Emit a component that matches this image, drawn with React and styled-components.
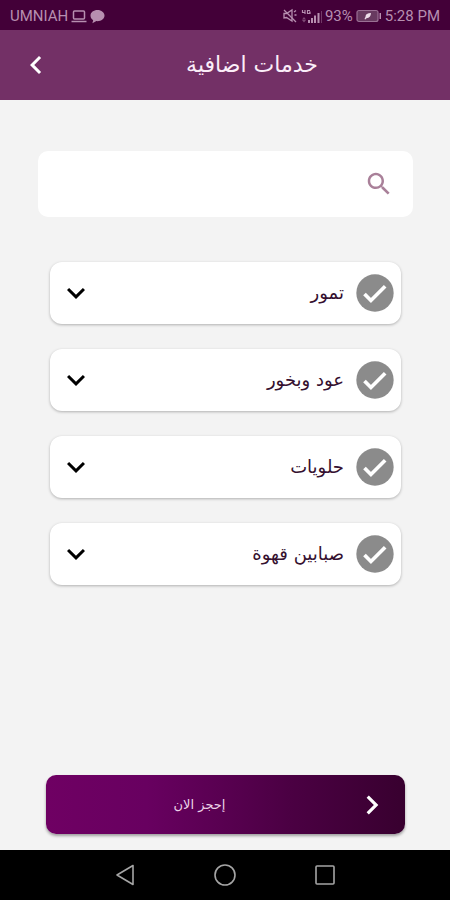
import React, { useState } from "react";
import styled, { createGlobalStyle } from "styled-components";

const GlobalStyle = createGlobalStyle`
  *, *::before, *::after { box-sizing: border-box; }
  body { margin: 0; background: #f3f3f3; }
  button, input { font: inherit; }
`;

const uiFont = `Roboto, "Liberation Sans", sans-serif`;
const arabicFont = `"DejaVu Sans", "Noto Sans", sans-serif`;

const Page = styled.div`
  display: flex;
  flex-direction: column;
  min-height: 100vh;
  background: #f3f3f3;
  font-family: ${arabicFont};
`;

const StatusBar = styled.div`
  display: flex;
  align-items: center;
  justify-content: space-between;
  height: 30px;
  padding: 2px 10px 0;
  background: #430038;
  color: #b78fb0;
  font-family: ${uiFont};
  font-size: 15px;
  line-height: 20px;
  white-space: nowrap;
`;

const StatusGroup = styled.div`
  display: flex;
  align-items: center;
  gap: ${(p) => p.$gap}px;
`;

const Header = styled.header`
  display: flex;
  align-items: center;
  height: 70px;
  background: #733066;
  color: #fff;
`;

const IconButton = styled.button`
  display: flex;
  align-items: center;
  justify-content: center;
  flex: none;
  width: 36px;
  height: 36px;
  padding: 0;
  border: 0;
  background: none;
  color: inherit;
  cursor: pointer;
`;

const BackButton = styled(IconButton)`
  margin-left: 18px;
`;

const Title = styled.h1`
  flex: 1;
  margin: 0;
  color: #fbeef9;
  font-size: 22px;
  font-weight: 400;
  line-height: 32px;
  text-align: center;
`;

const Content = styled.main`
  display: flex;
  flex: 1;
  flex-direction: column;
  padding: 51px 37px 16px 38px;
`;

const SearchBox = styled.label`
  display: flex;
  align-items: center;
  height: 66px;
  padding: 0 19px 0 12px;
  border-radius: 10px;
  background: #fff;
  color: #a98099;
`;

const SearchInput = styled.input`
  flex: 1;
  min-width: 0;
  height: 100%;
  border: 0;
  outline: 0;
  background: transparent;
  color: #3c0a33;
  font-size: 18px;
`;

const ServiceList = styled.ul`
  display: flex;
  flex-direction: column;
  gap: 25px;
  margin: 45px 12px 32px;
  padding: 0;
  list-style: none;
`;

const ServiceCard = styled.li`
  display: flex;
  align-items: center;
  justify-content: space-between;
  height: 62px;
  padding: 0 7px 0 8px;
  border-radius: 12px;
  background: #fff;
  box-shadow: 0 1px 3px rgba(0, 0, 0, 0.28);
  color: #000;
`;

const ServiceLabel = styled.label`
  display: flex;
  align-items: center;
  gap: 12px;
  color: #35102f;
  font-size: 18px;
  line-height: 28px;
  cursor: pointer;
`;

const Tick = styled.span`
  display: grid;
  width: 38px;
  height: 38px;
  color: #8b8b8b;

  & > * {
    grid-area: 1 / 1;
    width: 38px;
    height: 38px;
    margin: 0;
  }

  & > input {
    appearance: none;
    border-radius: 50%;
    cursor: pointer;
  }

  & > svg { pointer-events: none; }

  & > input:checked + svg { color: #733066; }
`;

const BookButton = styled.button`
  display: flex;
  align-items: center;
  height: 59px;
  margin: auto 8px 0;
  padding: 0 14px 0 0;
  border: 0;
  border-radius: 10px;
  background: linear-gradient(90deg, #6f0063 0%, #680060 28%, #4b0043 68%, #38002f 100%);
  box-shadow: 0 2px 3px rgba(0, 0, 0, 0.35);
  color: #fff;
  cursor: pointer;
`;

const BookText = styled.span`
  flex: 1;
  color: #ecd3e8;
  font-size: 13px;
  line-height: 20px;
  text-align: center;
`;

const NavBar = styled.nav`
  display: flex;
  align-items: center;
  justify-content: center;
  gap: 64px;
  height: 50px;
  background: #000;
  color: #a5a5a5;
`;

const Chevron = ({ d, size = 36 }) => (
  <svg width={size} height={size} viewBox="0 0 24 24" fill="currentColor" aria-hidden="true">
    <path d={d} />
  </svg>
);

const LEFT = "M15.41 7.41 14 6l-6 6 6 6 1.41-1.41L10.83 12z";
const RIGHT = "M10 6 8.59 7.41 13.17 12l-4.58 4.59L10 18l6-6z";
const DOWN = "M16.59 8.59 12 13.17 7.41 8.59 6 10l6 6 6-6z";

const LaptopIcon = () => (
  <svg width="16" height="14" viewBox="0 0 16 14" fill="none" stroke="currentColor" strokeWidth="1.5" aria-hidden="true">
    <rect x="2.5" y="2" width="11" height="8" rx="1" />
    <path d="M0.5 12.5h15" />
  </svg>
);

const ChatIcon = () => (
  <svg width="15" height="15" viewBox="0 0 15 15" fill="currentColor" aria-hidden="true">
    <path d="M7.5 1C3.6 1 .5 3.4.5 6.6c0 2 1 3.6 2.7 4.6L2.4 14.3l4-2.2c.4.1.7.1 1.1.1 3.9 0 7-2.5 7-5.6S11.4 1 7.5 1z" />
  </svg>
);

const MutedIcon = () => (
  <svg width="16" height="16" viewBox="0 0 16 16" fill="none" stroke="currentColor" strokeWidth="1.3" aria-hidden="true">
    <path d="M2 5.5h2.5L10 2v11L4.5 9.5 2 10z" />
    <path d="M2 2l12 12M12 4l2-1.5M12.5 7h2" />
  </svg>
);

const SignalIcon = () => (
  <svg width="21" height="15" viewBox="0 0 21 15" aria-hidden="true">
    <g fill="none" stroke="currentColor" strokeWidth="1.2">
      <path d="M1.5 1v2.5h3M4 1v4M9 1.5H6.5v3H9V3.2H8" />
    </g>
    <path fill="currentColor" opacity=".5" d="M3 8l2 2.5H1zM3 13.5L1 11h4z" />
    <path fill="currentColor" d="M7 11h2v3H7zM10 9h2v5h-2zM13 6.5h2V14h-2zM16.5 4h2v10h-2z" />
    <path fill="currentColor" opacity=".4" d="M20 2h1v12h-1z" />
  </svg>
);

const BatteryIcon = () => (
  <svg width="26" height="14" viewBox="0 0 26 14" aria-hidden="true">
    <rect x="1" y="1.5" width="21" height="11" rx="2" fill="#683a60" stroke="#9a7094" strokeWidth="1.2" />
    <path fill="currentColor" d="M23.5 4H25v6h-1.5z" />
    <path fill="#ecdce9" d="M15 4c-3.500 0-5.500 1.200-5.500 3.800L8.500 10l.8.500L10.500 9.200c3 0 4.200-2 4.500-5.200z" />
  </svg>
);

const SearchIcon = () => (
  <svg width="30" height="30" viewBox="0 0 24 24" fill="currentColor" aria-hidden="true">
    <path d="M15.5 14h-.79l-.28-.27C15.41 12.59 16 11.11 16 9.5 16 5.91 13.09 3 9.5 3S3 5.91 3 9.5 5.91 16 9.5 16c1.61 0 3.09-.59 4.23-1.57l.27.28v.79l5 4.99L20.49 19l-4.99-5zm-6 0C7.01 14 5 11.99 5 9.5S7.01 5 9.5 5 14 7.01 14 9.5 11.99 14 9.5 14z" />
  </svg>
);

const TickIcon = () => (
  <svg viewBox="0 0 112 112" aria-hidden="true">
    <circle cx="56" cy="56" r="55" fill="currentColor" />
    <path d="M25 59l19 19 42-42" fill="none" stroke="#fff" strokeWidth="11" />
  </svg>
);

const BackTriangle = () => (
  <svg width="22" height="24" viewBox="0 0 22 24" fill="none" stroke="currentColor" strokeWidth="1.6" strokeLinejoin="round" aria-hidden="true">
    <path d="M19 2.5v19L3 12z" />
  </svg>
);

const HomeCircle = () => (
  <svg width="24" height="24" viewBox="0 0 24 24" fill="none" stroke="currentColor" strokeWidth="1.6" aria-hidden="true">
    <circle cx="12" cy="12" r="10" />
  </svg>
);

const RecentSquare = () => (
  <svg width="22" height="22" viewBox="0 0 22 22" fill="none" stroke="currentColor" strokeWidth="1.6" aria-hidden="true">
    <rect x="2" y="2" width="18" height="18" rx="1" />
  </svg>
);

const services = [
  { id: "dates", name: "تمور" },
  { id: "oud", name: "عود وبخور" },
  { id: "sweets", name: "حلويات" },
  { id: "coffee", name: "صبابين قهوة" },
];

function Service({ id, name }) {
  const [open, setOpen] = useState(false);
  return (
    <ServiceCard>
      <IconButton type="button" aria-label={name} aria-expanded={open} onClick={() => setOpen(!open)}>
        <Chevron d={DOWN} />
      </IconButton>
      <ServiceLabel htmlFor={id}>
        <span dir="rtl">{name}</span>
        <Tick>
          <input type="checkbox" id={id} />
          <TickIcon />
        </Tick>
      </ServiceLabel>
    </ServiceCard>
  );
}

export default function App() {
  return (
    <Page lang="ar">
      <GlobalStyle />
      <StatusBar>
        <StatusGroup $gap={3}>
          <span>UMNIAH</span>
          <LaptopIcon />
          <ChatIcon />
        </StatusGroup>
        <StatusGroup $gap={3}>
          <MutedIcon />
          <SignalIcon />
          <span>93%</span>
          <BatteryIcon />
          <span>5:28 PM</span>
        </StatusGroup>
      </StatusBar>
      <Header>
        <BackButton type="button" aria-label="رجوع">
          <Chevron d={LEFT} />
        </BackButton>
        <Title dir="rtl">خدمات اضافية</Title>
      </Header>
      <Content>
        <SearchBox>
          <SearchInput type="search" dir="rtl" aria-label="بحث" />
          <SearchIcon />
        </SearchBox>
        <ServiceList>
          {services.map((s) => (
            <Service key={s.id} {...s} />
          ))}
        </ServiceList>
        <BookButton type="button">
          <BookText dir="rtl">إحجز الان</BookText>
          <Chevron d={RIGHT} size={38} />
        </BookButton>
      </Content>
      <NavBar>
        <IconButton type="button" aria-label="السابق"><BackTriangle /></IconButton>
        <IconButton type="button" aria-label="الرئيسية"><HomeCircle /></IconButton>
        <IconButton type="button" aria-label="التطبيقات"><RecentSquare /></IconButton>
      </NavBar>
    </Page>
  );
}
